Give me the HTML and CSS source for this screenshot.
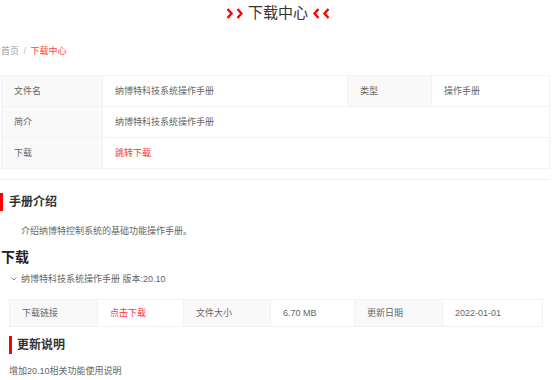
FILE: index.html
```html
<!DOCTYPE html>
<html lang="zh-CN">
<head>
  <meta charset="UTF-8">
  <meta name="viewport" content="width=device-width, initial-scale=1.0">
  <title>下载中心</title>
  <link rel="stylesheet" href="styles.css">
</head>
<body>
  <header class="page-title">
    <svg class="arrows" width="17" height="11" viewBox="0 0 17 11">
      <polyline points="1.5,1 5.5,5.5 1.5,10" />
      <polyline points="11.5,1 15.5,5.5 11.5,10" />
    </svg>
    <h1>下载中心</h1>
    <svg class="arrows" width="17" height="11" viewBox="0 0 17 11">
      <polyline points="5.5,1 1.5,5.5 5.5,10" />
      <polyline points="15.5,1 11.5,5.5 15.5,10" />
    </svg>
  </header>

  <nav class="breadcrumb">
    <span class="crumb">首页</span>
    <span class="sep">/</span>
    <span class="crumb current">下载中心</span>
  </nav>

  <table class="info-table">
    <colgroup>
      <col style="width: 101px">
      <col style="width: 245px">
      <col style="width: 84px">
      <col>
    </colgroup>
    <tr>
      <td class="label">文件名</td>
      <td>纳博特科技系统操作手册</td>
      <td class="label">类型</td>
      <td>操作手册</td>
    </tr>
    <tr>
      <td class="label">简介</td>
      <td colspan="3">纳博特科技系统操作手册</td>
    </tr>
    <tr>
      <td class="label">下载</td>
      <td colspan="3"><a href="#" class="link">跳转下载</a></td>
    </tr>
  </table>

  <div class="divider"></div>

  <h2 class="section-title">手册介绍</h2>
  <p class="intro">介绍纳博特控制系统的基础功能操作手册。</p>

  <h2 class="download-title">下载</h2>
  <div class="collapse-item">
    <svg class="caret" width="6" height="4" viewBox="0 0 6 4">
      <polyline points="0.5,0.5 3,3 5.5,0.5" />
    </svg>
    <span>纳博特科技系统操作手册 版本:20.10</span>
  </div>

  <table class="file-table">
    <colgroup>
      <col style="width: 88px">
      <col style="width: 86px">
      <col style="width: 87px">
      <col style="width: 84px">
      <col style="width: 88px">
      <col>
    </colgroup>
    <tr>
      <td class="label">下载链接</td>
      <td><a href="#" class="link">点击下载</a></td>
      <td class="label">文件大小</td>
      <td>6.70 MB</td>
      <td class="label">更新日期</td>
      <td>2022-01-01</td>
    </tr>
  </table>

  <h2 class="section-title sub">更新说明</h2>
  <p class="notes">增加20.10相关功能使用说明</p>
</body>
</html>
```

FILE: styles.css
```css
body {
  margin: 0;
  font-family: "Liberation Sans", "Noto Sans CJK SC", sans-serif;
  font-size: 9px;
  line-height: 14px;
  color: #666;
  background-color: #fff;
}
.page-title {
  display: flex;
  justify-content: center;
  align-items: center;
  gap: 5px;
  height: 26px;
  padding-left: 3px;
}
.page-title h1 {
  margin: 0;
  font-size: 15px;
  font-weight: normal;
  line-height: 26px;
  color: #333;
}
.arrows polyline {
  fill: none;
  stroke: #f00;
  stroke-width: 2.4;
}
.breadcrumb {
  margin-top: 18px;
  padding-left: 1px;
  color: #999;
}
.breadcrumb .sep {
  margin: 0 2px;
  color: #bbb;
}
.breadcrumb .current {
  color: #f44;
}
table {
  border-collapse: collapse;
  table-layout: fixed;
}
td {
  border: 1px solid #f2f2f2;
  padding: 0 12px;
  text-align: left;
  white-space: nowrap;
}
td.label {
  background-color: #f9f9f9;
}
.info-table {
  margin: 17px 0 0 1px;
  width: 549px;
}
.info-table td {
  height: 30px;
}
.link {
  color: #f33;
  text-decoration: none;
}
.divider {
  margin-top: 10px;
  width: 550px;
  border-top: 1px solid #f0f0f0;
}
.section-title {
  margin: 13px 0 0 0;
  padding-left: 6px;
  border-left: 3px solid #f00;
  font-size: 12px;
  line-height: 18px;
  color: #333;
}
.section-title.sub {
  margin: 9px 0 0 9px;
  padding-left: 5px;
}
.intro {
  margin: 13px 0 0 0;
  padding-left: 21px;
}
.download-title {
  margin: 10px 0 0 1px;
  font-size: 14px;
  line-height: 18px;
  color: #222;
}
.collapse-item {
  display: flex;
  align-items: center;
  gap: 4px;
  margin-top: 6px;
  padding-left: 11px;
}
.caret polyline {
  fill: none;
  stroke: #888;
  stroke-width: 1;
}
.file-table {
  margin: 13px 0 0 9px;
  width: 534px;
}
.file-table td {
  height: 26px;
}
.notes {
  margin: 10px 0 0 9px;
}
```
